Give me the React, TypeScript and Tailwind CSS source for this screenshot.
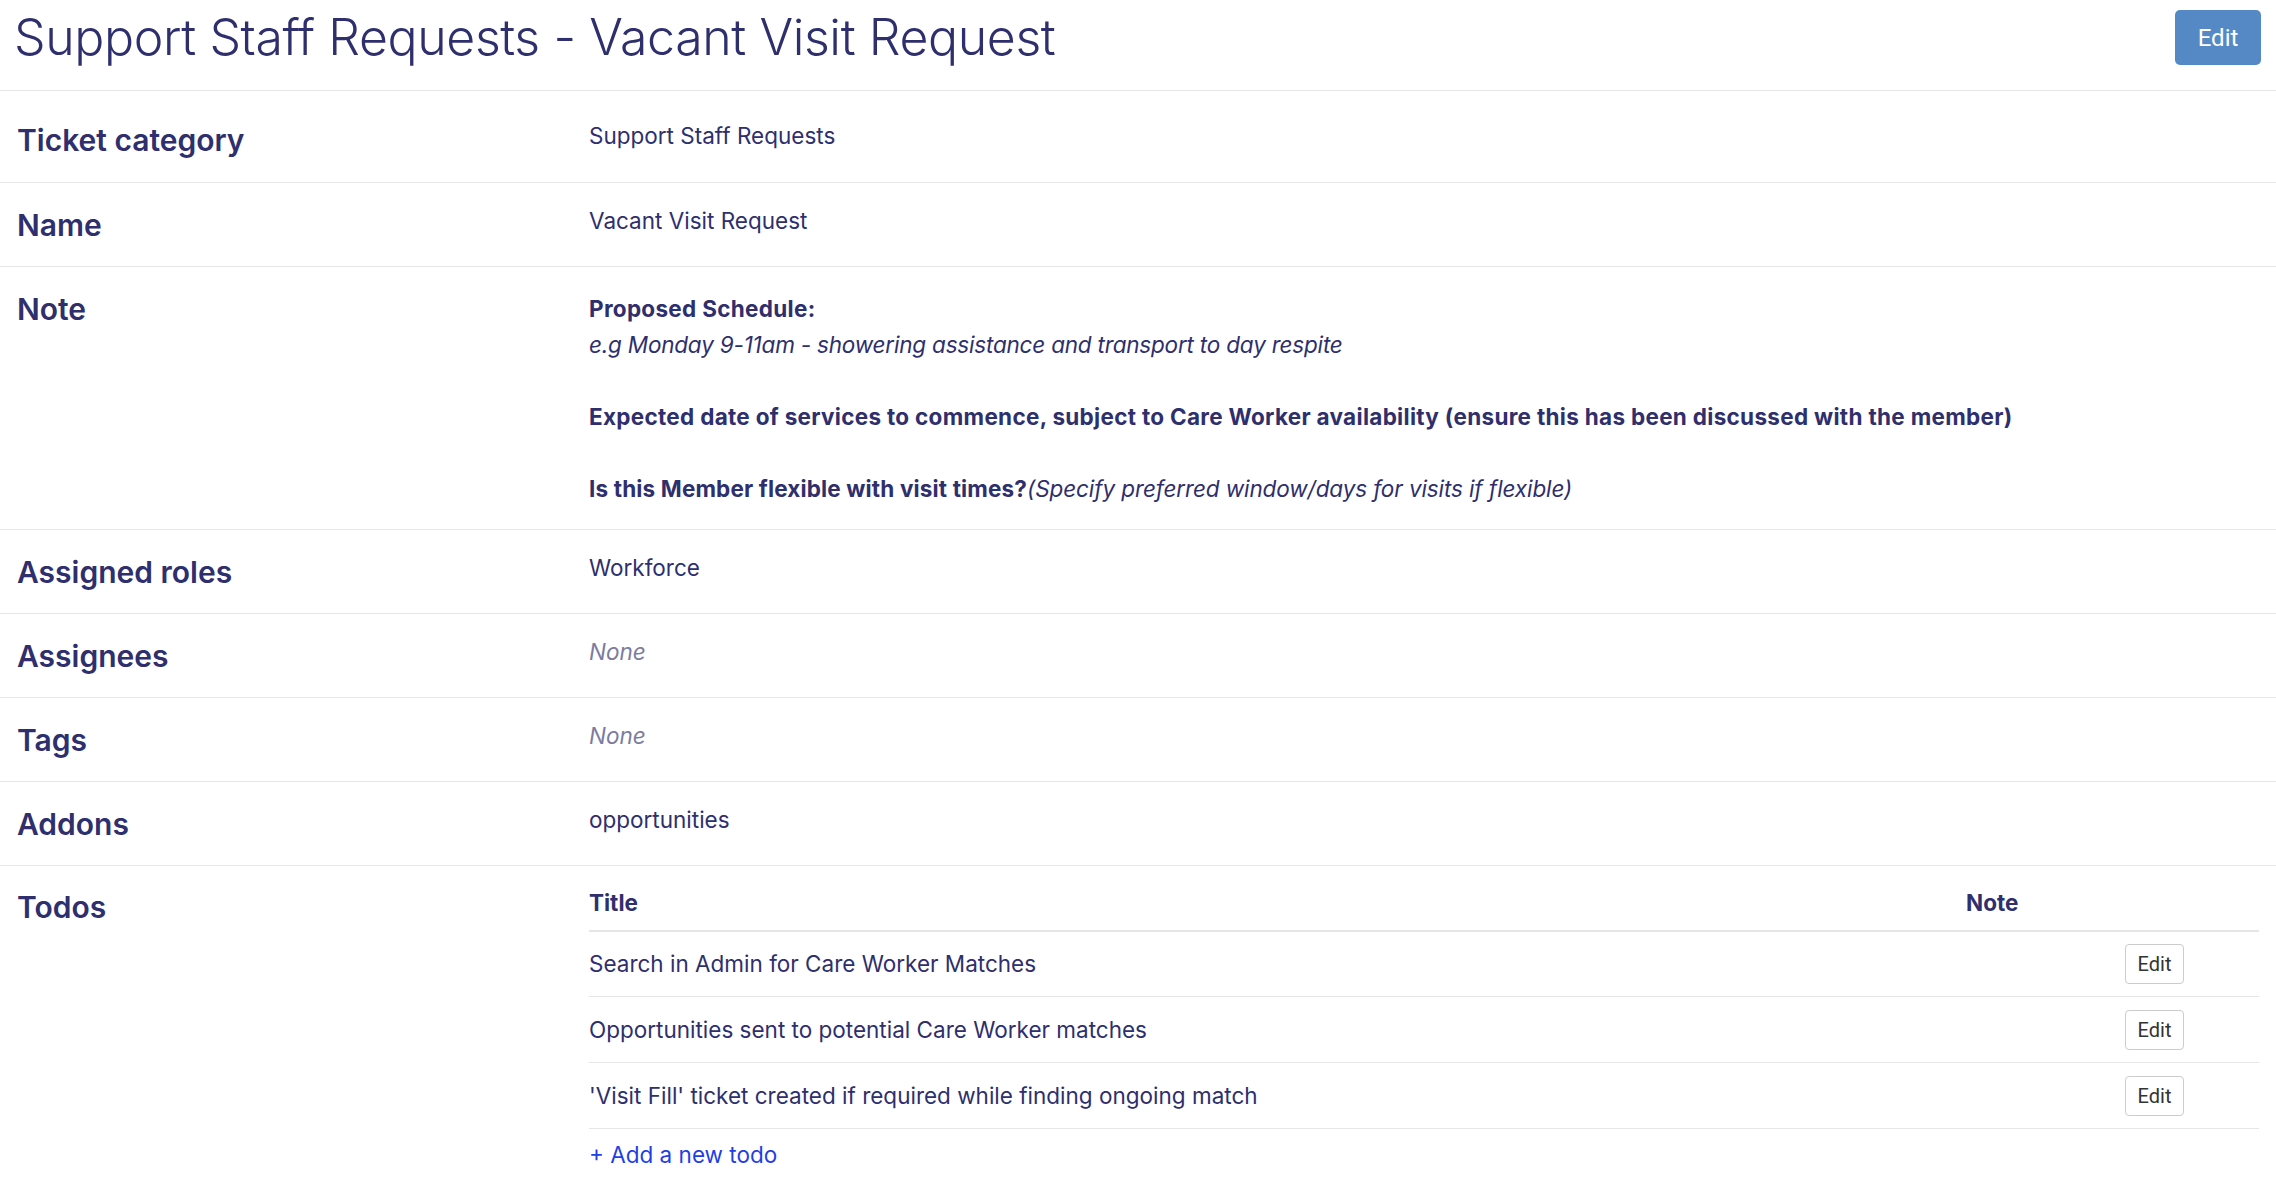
import React from "react";

const font = { fontFamily: "Inter, 'Noto Sans', sans-serif" };

function Row({ label, children, first, className, valueClass }: { label: string; children: React.ReactNode; first?: boolean; className?: string; valueClass?: string }) {
  return (
    <div className={`grid grid-cols-[572px_1fr] pl-[17px] pr-[17px] border-b border-[#e6e6e6] ${className ?? ""}`}>
      <div className={`text-[30px] font-semibold leading-[36px] ${first ? "pt-[31px]" : "pt-[24px]"}`}>{label}</div>
      <div className={`text-[22.5px] leading-[36px] ${valueClass ?? (first ? "pt-[27px]" : "pt-[20px]")}`}>{children}</div>
    </div>
  );
}

function SmallEdit() {
  return (
    <button
      className="h-[40px] w-[59px] rounded-[4px] border border-[#cccccc] bg-white text-[20px] text-[#333333]"
      style={{ fontFamily: "Roboto, 'Open Sans', sans-serif" }}
    >
      Edit
    </button>
  );
}

export default function App() {
  const todos = [
    "Search in Admin for Care Worker Matches",
    "Opportunities sent to potential Care Worker matches",
    "'Visit Fill' ticket created if required while finding ongoing match",
  ];
  return (
    <div className="min-h-[1182px] bg-white text-[#2e2f6c]" style={font}>
      <div className="flex h-[91px] items-start justify-between border-b border-[#e6e6e6] pl-[14px] pr-[15px]">
        <h1 className="mt-[12px] text-[50px] font-light leading-none tracking-[-0.4px]">Support Staff Requests - Vacant Visit Request</h1>
        <button
          className="mt-[10px] h-[55px] w-[86px] rounded-[5px] bg-[#5589c6] text-[24px] text-white"
          style={{ fontFamily: "Roboto, 'Open Sans', sans-serif" }}
        >
          Edit
        </button>
      </div>

      <Row label="Ticket category" first className="h-[92px]">Support Staff Requests</Row>
      <Row label="Name" className="h-[84px]">Vacant Visit Request</Row>
      <Row label="Note" className="pb-[22px]" valueClass="pt-[24px]">
        <div>
          <div className="font-bold tracking-[0.3px]">Proposed Schedule:</div>
          <div className="italic tracking-[-0.2px]">e.g Monday 9-11am - showering assistance and transport to day respite</div>
          <div>&nbsp;</div>
          <div className="font-bold tracking-[0.3px]">Expected date of services to commence, subject to Care Worker availability (ensure this has been discussed with the member)</div>
          <div>&nbsp;</div>
          <div>
            <span className="font-bold tracking-[0.15px]">Is this Member flexible with visit times?</span>
            <span className="italic tracking-[-0.1px]">(Specify preferred window/days for visits if flexible)</span>
          </div>
        </div>
      </Row>
      <Row label="Assigned roles" className="h-[84px]">Workforce</Row>
      <Row label="Assignees" className="h-[84px]"><span className="italic text-[#7b7c9f]">None</span></Row>
      <Row label="Tags" className="h-[84px]"><span className="italic text-[#7b7c9f]">None</span></Row>
      <Row label="Addons" className="h-[84px]">opportunities</Row>

      <div className="grid grid-cols-[572px_1fr] pl-[17px] pr-[17px]">
        <div className="text-[30px] font-semibold leading-[36px] pt-[23px]">Todos</div>
        <div className="pt-[9px] text-[22.5px]">
          <div className="grid h-[57px] grid-cols-[1377px_159px_1fr] items-center border-b-2 border-[#e6e6e6] font-bold">
            <div>Title</div>
            <div>Note</div>
            <div></div>
          </div>
          {todos.map((t, i) => (
            <div key={t} className={`grid ${i === 0 ? "h-[65px]" : "h-[66px]"} grid-cols-[1377px_159px_1fr] items-center border-b border-[#e6e6e6]`}>
              <div>{t}</div>
              <div></div>
              <div><SmallEdit /></div>
            </div>
          ))}
          <div className="pt-[11px] leading-[30px]">
            <a className="text-[#1f3fe4] cursor-pointer">+ Add a new todo</a>
          </div>
        </div>
      </div>
    </div>
  );
}
